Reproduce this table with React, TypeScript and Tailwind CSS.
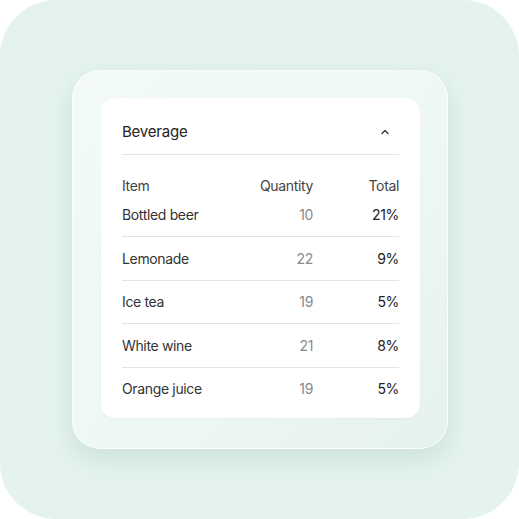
const rows = [
  { item: "Bottled beer", qty: 10, total: "21%" },
  { item: "Lemonade", qty: 22, total: "9%" },
  { item: "Ice tea", qty: 19, total: "5%" },
  { item: "White wine", qty: 21, total: "8%" },
  { item: "Orange juice", qty: 19, total: "5%" },
];

const ChevronUp = () => (
  <svg width="10" height="10" viewBox="0 0 10 10" fill="none">
    <path d="M2 6.5 L5 3.5 L8 6.5" stroke="#333" strokeWidth="1.3" strokeLinecap="round" strokeLinejoin="round" />
  </svg>
);

const App = () => {
  return (
    <div className="w-[519px] h-[519px] bg-white" style={{ fontFamily: "Inter, 'Noto Sans', sans-serif" }}>
      <div className="w-[519px] h-[519px] rounded-[56px] bg-[#e4f3ee] pl-[72px] pt-[70px]">
        <div className="w-[376px] h-[379px] rounded-[28px] bg-gradient-to-br from-[#f3faf8] via-[#eff8f5] to-[#e6f2ee] border border-white/70 shadow-[0_10px_24px_rgba(80,130,115,0.16)] pl-[28px] pt-[27px]">
          <div className="w-[319px] h-[320px] rounded-[14px] bg-white px-[21px] pt-[21.5px] shadow-[0_1px_3px_rgba(0,0,0,0.03)]">
            <div className="flex items-center justify-between h-[24px]">
              <span className="text-[15px] tracking-[-0.2px] text-[#222] leading-[24px]">Beverage</span>
              <span className="mr-[9px]"><ChevronUp /></span>
            </div>
            <div className="mt-[10.5px] h-px bg-[#e2e4e4]" />
            <div className="mt-[21px] flex h-[20px] items-center text-[14px] tracking-[-0.35px] text-[#444] leading-[20px]">
              <span className="flex-1">Item</span>
              <span className="w-[100px] text-right pr-[1px]">Quantity</span>
              <span className="w-[85px] text-right">Total</span>
            </div>
            <div>
              {rows.map((r) => (
                <div
                  key={r.item}
                  className="flex items-center h-[20px] box-content text-[14px] tracking-[-0.35px] leading-[20px] first:pt-[9px] pt-[11.25px] pb-[11.25px] border-b border-[#e2e4e4] last:border-b-0"
                >
                  <span className="flex-1 text-[#333]">{r.item}</span>
                  <span className="w-[100px] text-right pr-[1px] text-[#8a8a8a]">{r.qty}</span>
                  <span className="w-[85px] text-right text-[#222]">{r.total}</span>
                </div>
              ))}
            </div>
          </div>
        </div>
      </div>
    </div>
  );
};

export default App;
